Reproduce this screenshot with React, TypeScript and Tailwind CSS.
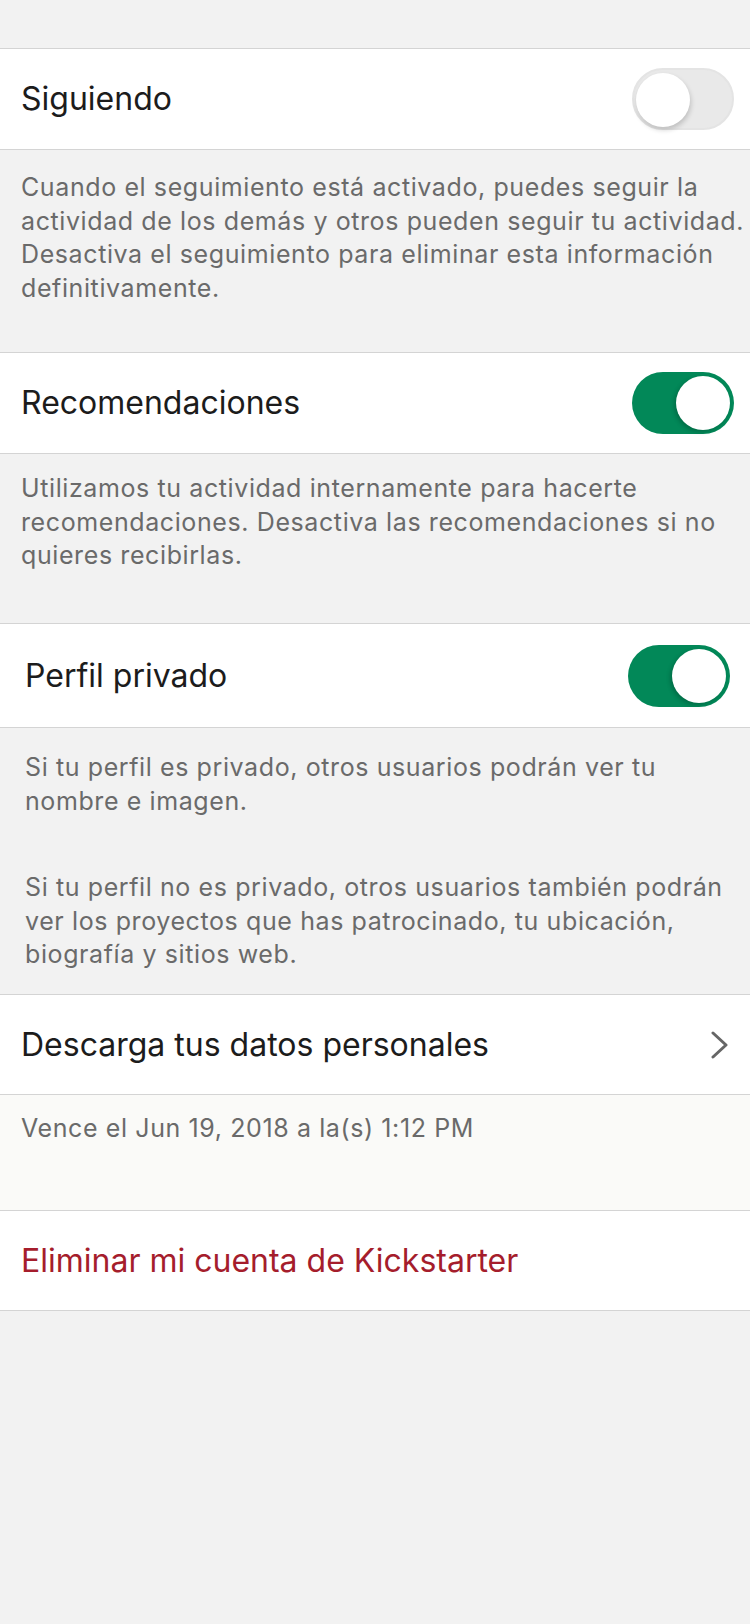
import type { ReactNode } from 'react';

const font = { fontFamily: 'Inter, "Noto Sans", sans-serif' };

function Toggle({ on }: { on: boolean }) {
  return on ? (
    <div className="relative h-[62px] w-[102px] shrink-0 rounded-full bg-[#028858]">
      <div className="absolute right-[4px] top-[4px] h-[54px] w-[54px] rounded-full bg-white shadow-[-2px_2px_4px_rgba(0,0,0,0.2)]" />
    </div>
  ) : (
    <div className="relative h-[62px] w-[102px] shrink-0 rounded-full border-[2px] border-[#e4e4e4] bg-[#e9e9e9]">
      <div className="absolute left-[2px] top-[3px] h-[54px] w-[54px] rounded-full bg-white shadow-[1px_3px_5px_rgba(0,0,0,0.18)]" />
    </div>
  );
}

function Row({
  label,
  children,
  className = '',
  labelClass = 'text-[#1c1c1c]',
}: {
  label: string;
  children?: ReactNode;
  className?: string;
  labelClass?: string;
}) {
  return (
    <div className={`flex items-center justify-between border-y border-[#d4d4d4] bg-white ${className}`}>
      <span className={`text-[32px] ${labelClass}`}>{label}</span>
      {children}
    </div>
  );
}

const desc = 'whitespace-nowrap text-[25px] leading-[33.5px] tracking-[0.6px] text-[#6a6a6a]';

export default function App() {
  return (
    <div className="min-h-[1624px] w-[750px] overflow-hidden bg-[#f2f2f2]" style={font}>
      <div className="h-[48px]" />

      <Row label="Siguiendo" className="h-[102px] pl-[21px] pr-[16px]">
        <Toggle on={false} />
      </Row>
      <div className={`h-[202px] px-[21px] pt-[21px] ${desc}`}>
        Cuando el seguimiento está activado, puedes seguir la
        <br />
        actividad de los demás y otros pueden seguir tu actividad.
        <br />
        Desactiva el seguimiento para eliminar esta información
        <br />
        definitivamente.
      </div>

      <Row label="Recomendaciones" className="h-[102px] pl-[21px] pr-[16px]">
        <Toggle on />
      </Row>
      <div className={`h-[169px] px-[21px] pt-[18px] ${desc}`}>
        Utilizamos tu actividad internamente para hacerte
        <br />
        recomendaciones. Desactiva las recomendaciones si no
        <br />
        quieres recibirlas.
      </div>

      <Row label="Perfil privado" className="h-[105px] pl-[25px] pr-[20px]">
        <Toggle on />
      </Row>
      <div className={`flex h-[266px] flex-col gap-[53px] px-[25px] pt-[23px] ${desc}`}>
        <p>
          Si tu perfil es privado, otros usuarios podrán ver tu
          <br />
          nombre e imagen.
        </p>
        <p>
          Si tu perfil no es privado, otros usuarios también podrán
          <br />
          ver los proyectos que has patrocinado, tu ubicación,
          <br />
          biografía y sitios web.
        </p>
      </div>

      <Row label="Descarga tus datos personales" className="h-[101px] pl-[21px] pr-[21px]">
        <svg width="18" height="28" viewBox="0 0 18 28" fill="none">
          <path d="M2 2l13 12L2 26" stroke="#666" strokeWidth="3" strokeLinecap="round" strokeLinejoin="round" />
        </svg>
      </Row>
      <div className={`h-[115px] bg-[#fafaf8] px-[21px] pt-[17px] ${desc}`}>Vence el Jun 19, 2018 a la(s) 1:12 PM</div>

      <Row
        label="Eliminar mi cuenta de Kickstarter"
        className="h-[101px] pl-[21px]"
        labelClass="text-[#a51d2c]"
      />
    </div>
  );
}
